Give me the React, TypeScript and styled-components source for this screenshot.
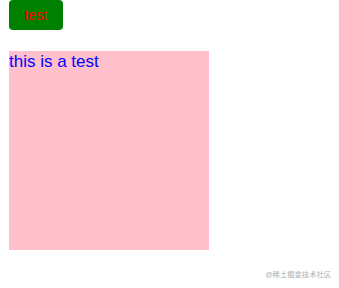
import React from "react";
import styled, { createGlobalStyle } from "styled-components";

const Global = createGlobalStyle`
  html, body { margin: 0; padding: 0; background: #fff; }
  body { font-family: "Liberation Sans", "Noto Sans CJK SC", sans-serif; }
`;

const Page = styled.div`
  position: relative;
  width: 339px;
  height: 288px;
  padding-left: 9px;
  box-sizing: border-box;
  display: flex;
  flex-direction: column;
  align-items: flex-start;
  gap: 21px;
`;

const Button = styled.button`
  width: 54px;
  height: 30px;
  border: none;
  border-radius: 4px;
  background: #008000;
  color: #ff0000;
  font-family: "Liberation Sans", sans-serif;
  font-size: 14px;
  padding: 0;
  cursor: pointer;
`;

const Box = styled.div`
  width: 200px;
  height: 199px;
  background: pink;
  color: blue;
  font-size: 17px;
  line-height: 22px;
`;

const Watermark = styled.span`
  position: absolute;
  right: 8px;
  bottom: 9px;
  font-size: 7.3px;
  color: #b0b0b0;
  font-family: "Liberation Sans", "Noto Sans CJK SC", sans-serif;
`;

export default function App() {
  return (
    <>
      <Global />
      <Page>
        <Button>test</Button>
        <Box>this is a test</Box>
        <Watermark>@稀土掘金技术社区</Watermark>
      </Page>
    </>
  );
}
